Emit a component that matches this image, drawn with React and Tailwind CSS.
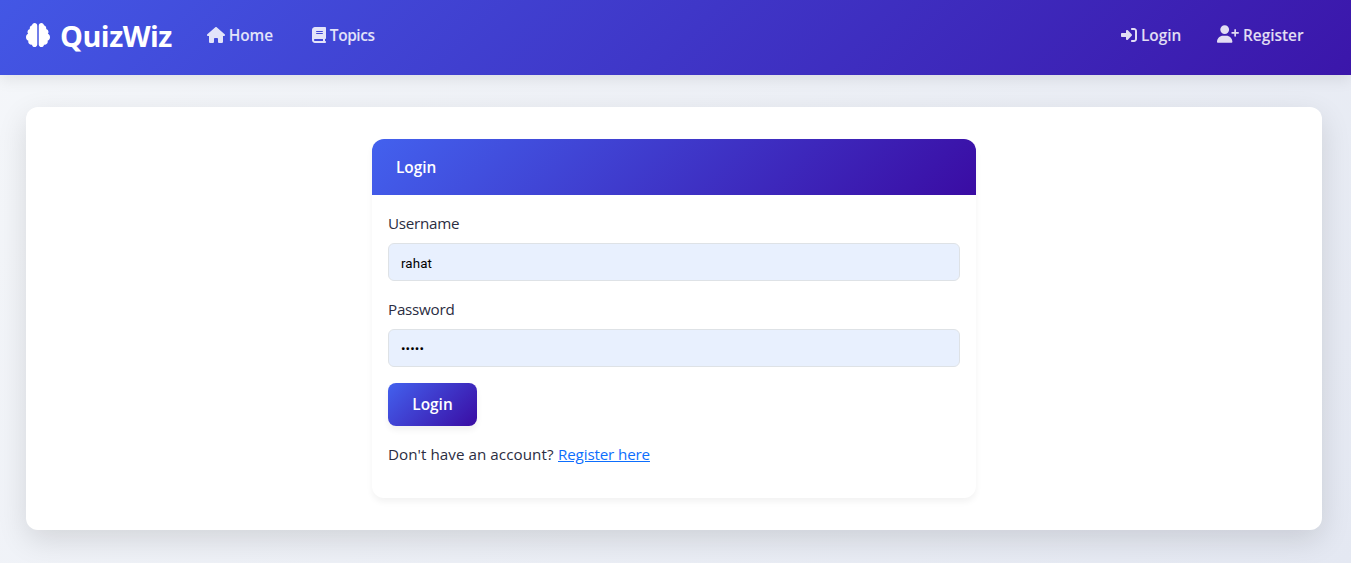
import { FaBrain, FaHouse, FaBook, FaRightToBracket, FaUserPlus } from "react-icons/fa6";

function NavItem({ icon, label, className, textClass }) {
  return (
    <a href="#" className={`flex items-center text-[15.4px] font-[650] leading-6 text-white/85 ${className ?? ""}`}>
      {icon}
      <span className={`whitespace-nowrap pt-[2px] ${textClass}`}>{label}</span>
    </a>
  );
}

function Field({ label, type, value }) {
  return (
    <div className="mb-4">
      <label className="mb-2 block text-[15.2px] leading-6 tracking-[-0.25px]">{label}</label>
      <input
        type={type}
        defaultValue={value}
        className={`block h-[38px] w-full rounded-md border border-[#dee2e6] bg-[#e8f0fe] px-3 font-[Roboto] text-[13.33px] tracking-[0.1px] text-black outline-none ${type === "text" ? "pt-[2px]" : ""}`}
      />
    </div>
  );
}

export default function App() {
  return (
    <div className="min-h-[563px] overflow-hidden bg-[linear-gradient(135deg,#f5f7fa_0%,#e4e8f2_100%)] font-['Open_Sans','Noto_Sans',sans-serif] text-[#2b2d42]">
      <nav className="relative flex h-[75px] items-center bg-[linear-gradient(135deg,#4357e5,#3b16aa)] pb-[5px] pl-[26px] shadow-[0_4px_15px_rgba(0,0,0,0.09)]">
        <a href="#" className="mr-[35px] flex items-center text-white">
          <FaBrain className="mr-[10px] size-6" />
          <span className="text-[28.8px] font-bold leading-[43px] tracking-[-0.5px]">QuizWiz</span>
        </a>
        <NavItem icon={<FaHouse className="mr-1 h-4 w-[18px]" />} label="Home" className="mr-[39px]" textClass="w-[44px] tracking-[-0.1px]" />
        <NavItem icon={<FaBook className="mr-1 h-4 w-[14px]" />} label="Topics" textClass="tracking-[-0.4px]" />
        <div className="ml-auto mr-[46px] flex">
          <NavItem icon={<FaRightToBracket className="mr-1 size-4" />} label="Login" className="mr-[35px]" textClass="w-[41px]" />
          <NavItem icon={<FaUserPlus className="mr-1 mb-[2px] h-[18px] w-[22px]" />} label="Register" textClass="w-[62px]" />
        </div>
      </nav>
      <main className="mt-8 ml-[26px] h-[423px] w-[1296px] rounded-xl bg-white pt-8 shadow-[0_10px_30px_rgba(0,0,0,0.12)]">
        <section className="ml-[346px] h-[359px] w-[604px] overflow-hidden rounded-xl bg-white shadow-[0_4px_6px_rgba(0,0,0,0.05)]">
          <h2 className="flex h-14 items-center bg-[linear-gradient(135deg,#4361ee,#3a0ca3)] px-6 pt-[2px] text-[15.4px] font-[650] leading-6 text-white">
            Login
          </h2>
          <form className="p-4">
            <Field label="Username" type="text" value="rahat" />
            <Field label="Password" type="password" value="12345" />
            <button
              type="button"
              className="block h-[43px] w-[89px] rounded-lg bg-[linear-gradient(135deg,#4361ee,#3a0ca3)] pt-px text-[15.4px] font-[650] text-white shadow-[0_4px_6px_rgba(0,0,0,0.06)]"
            >
              Login
            </button>
            <p className="mt-4 whitespace-nowrap text-[15.2px] leading-6">
              <span className="inline-block w-[170px] tracking-[0.05px]">Don't have an account?</span>
              <a href="#" className="tracking-[-0.15px] text-[#0d6efd] underline">Register here</a>
            </p>
          </form>
        </section>
      </main>
    </div>
  );
}
